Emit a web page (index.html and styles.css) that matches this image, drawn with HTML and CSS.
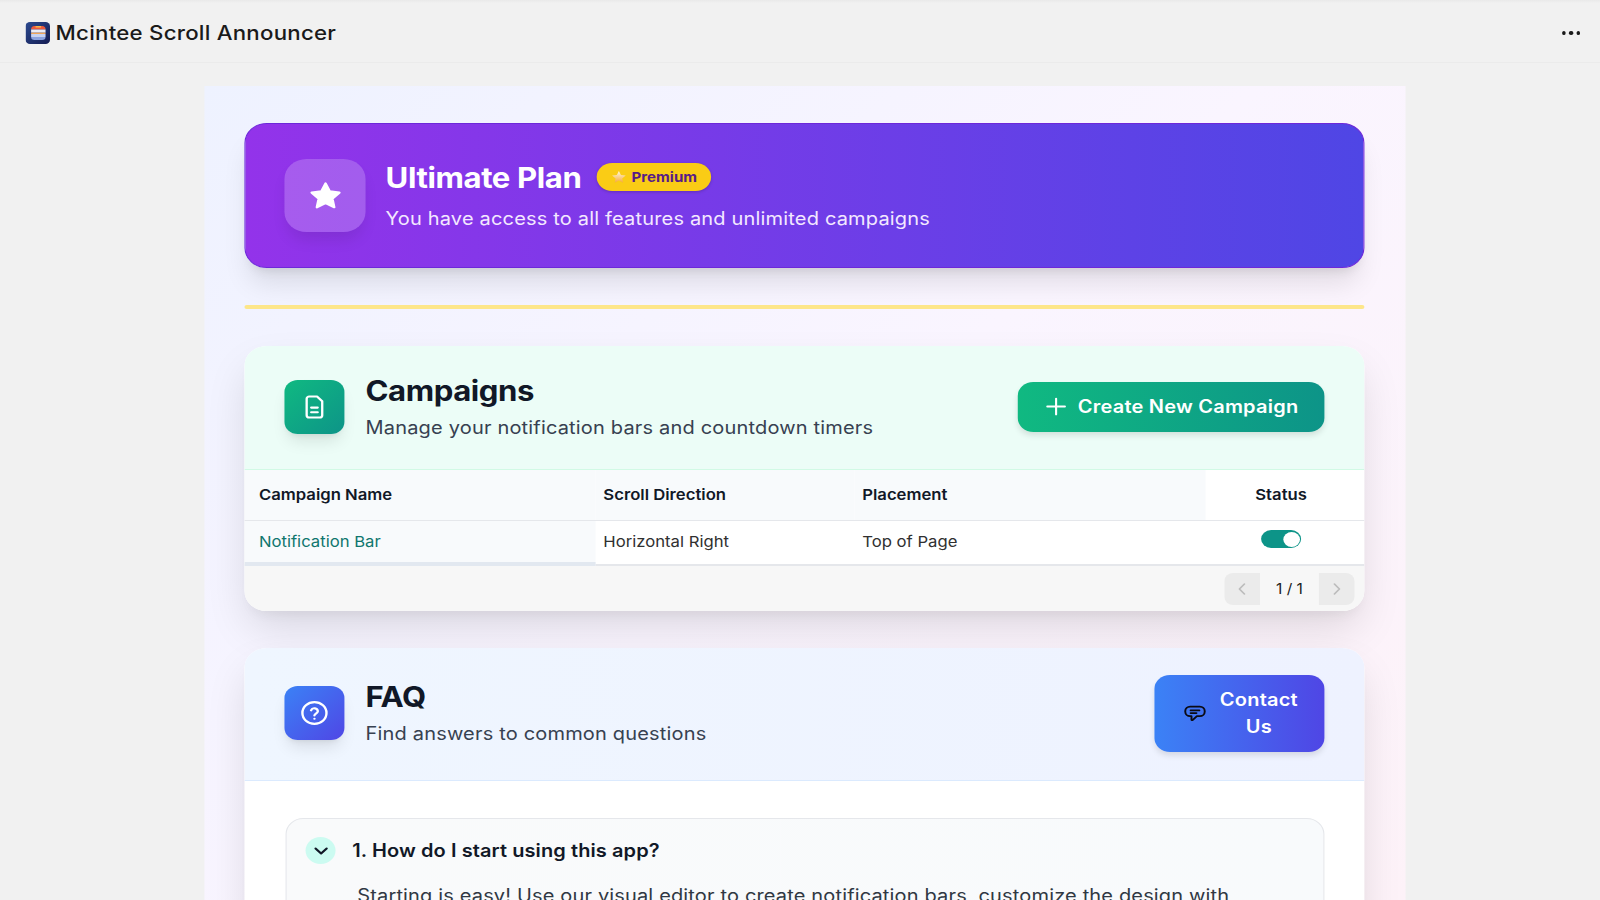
FILE: index.html
```html
<!DOCTYPE html>
<html lang="en">
<head>
<meta charset="utf-8">
<title>Mcintee Scroll Announcer</title>
<link rel="stylesheet" href="styles.css">
</head>
<body>
<div class="app">
  <header class="topbar">
    <div class="brand">
      <svg class="logo" viewBox="0 0 22 22" aria-hidden="true">
        <defs>
          <linearGradient id="lg" x1="0" y1="0" x2="1" y2="1"><stop offset="0" stop-color="#2c4a8f"/><stop offset="1" stop-color="#141c52"/></linearGradient>
        </defs>
        <rect width="22" height="22" rx="4" fill="url(#lg)"/>
        <path d="M5 7.5 Q5 4 8 4 H15 Q18 4 18 7.5 Z" fill="#ee5a3c"/>
        <rect x="9" y="4" width="5" height="1.6" fill="#f7b24a"/>
        <rect x="5" y="7.5" width="13" height="3.2" fill="#e9ecf7"/>
        <rect x="5" y="10.7" width="13" height="1.3" fill="#f0a65a"/>
        <rect x="5" y="12" width="13" height="3" fill="#c7d3f2"/>
        <path d="M5 15 H18 Q18 18 15 18 H8 Q5 18 5 15Z" fill="#8aa2e0"/>
      </svg>
      <span class="brand-name">Mcintee Scroll Announcer</span>
    </div>
    <div class="dots" aria-label="More"><i></i><i></i><i></i></div>
  </header>

  <main class="panel">
    <section class="plan">
      <div class="plan-icon">
        <svg viewBox="0 0 24 24" width="34" height="34" aria-hidden="true"><path fill="#fff" stroke="#fff" stroke-width="1.6" stroke-linejoin="round" d="M12 3.2l2.7 5.6 6.1.8-4.5 4.2 1.2 6.1L12 17l-5.5 2.9 1.2-6.1-4.5-4.2 6.1-.8z"/></svg>
      </div>
      <div class="plan-text">
        <div class="plan-head">
          <h1 class="plan-title">Ultimate Plan</h1>
          <span class="badge">
            <svg viewBox="0 0 24 24" width="14" height="14" aria-hidden="true"><defs><linearGradient id="st" x1="0" y1="0" x2="0" y2="1"><stop offset="0" stop-color="#fffbe0"/><stop offset="1" stop-color="#f6a93b"/></linearGradient></defs><path fill="url(#st)" d="M12 1.500l3.200 6.900 7.300.9-5.400 5.100 1.400 7.400L12 18.200l-6.500 3.600 1.400-7.400-5.400-5.100 7.300-.9z"/></svg>
            Premium
          </span>
        </div>
        <p class="plan-sub">You have access to all features and unlimited campaigns</p>
      </div>
    </section>

    <div class="rule"></div>

    <section class="card">
      <div class="card-head head-green">
        <div class="head-left">
          <div class="tile tile-green">
            <svg viewBox="0 0 24 24" width="28" height="28" fill="none" stroke="#fff" stroke-width="1.8" stroke-linecap="round" stroke-linejoin="round" aria-hidden="true"><path d="M14 3H8a2 2 0 0 0-2 2v14a2 2 0 0 0 2 2h8a2 2 0 0 0 2-2V7z"/><path d="M9.500 12.500h5M9.500 16.500h5"/></svg>
          </div>
          <div>
            <h2 class="card-title">Campaigns</h2>
            <p class="card-sub">Manage your notification bars and countdown timers</p>
          </div>
        </div>
        <button class="btn btn-green">
          <svg viewBox="0 0 18 18" width="19" height="19" fill="none" stroke="#fff" stroke-width="1.8" stroke-linecap="round" aria-hidden="true"><path d="M9 1.500v15M1.500 9h15"/></svg>
          Create New Campaign
        </button>
      </div>

      <div class="table">
        <div class="t-row t-header">
          <div class="th c1">Campaign Name</div>
          <div class="th c2">Scroll Direction</div>
          <div class="th c3">Placement</div>
          <div class="th c4">Status</div>
        </div>
        <div class="t-row t-body">
          <div class="td c1 td-link">Notification Bar</div>
          <div class="td c2">Horizontal Right</div>
          <div class="td c3">Top of Page</div>
          <div class="td c4"><span class="toggle"><i></i></span></div>
        </div>
      </div>

      <div class="pager">
        <span class="page-btn page-prev"><svg viewBox="0 0 16 16" width="16" height="16" fill="none" stroke="#bdbdbd" stroke-width="1.6" stroke-linecap="round" stroke-linejoin="round" aria-hidden="true"><path d="M10 3L5.500 8l4.500 5"/></svg></span>
        <span class="page-num">1 / 1</span>
        <span class="page-btn page-next"><svg viewBox="0 0 16 16" width="16" height="16" fill="none" stroke="#bdbdbd" stroke-width="1.6" stroke-linecap="round" stroke-linejoin="round" aria-hidden="true"><path d="M6 3l4.500 5L6 13"/></svg></span>
      </div>
    </section>

    <section class="card card-faq">
      <div class="card-head head-blue">
        <div class="head-left">
          <div class="tile tile-blue">
            <svg viewBox="0 0 24 24" width="26" height="26" fill="none" stroke="#fff" stroke-width="2" stroke-linecap="round" stroke-linejoin="round" aria-hidden="true"><circle cx="12" cy="12" r="10"/><path d="M9.200 9.500a2.900 2.900 0 0 1 5.600.9c0 1.900-2.800 2.400-2.800 3.900"/><path d="M12 17.300h.01"/></svg>
          </div>
          <div>
            <h2 class="card-title">FAQ</h2>
            <p class="card-sub">Find answers to common questions</p>
          </div>
        </div>
        <button class="btn btn-blue">
          <svg viewBox="0 0 24 24" width="21" height="21" fill="none" stroke="#0b0b14" stroke-width="2" stroke-linecap="round" stroke-linejoin="round" aria-hidden="true"><path d="M7 4h10a5 5 0 0 1 5 5v1a5 5 0 0 1-5 5h-3l-4.500 4.500c-.5.400-1.100.100-1.100-.5V15H7a5 5 0 0 1-5-5V9a5 5 0 0 1 5-5z"/><path d="M7.500 8.500h9M7.500 11.500h6"/></svg>
          <span class="btn-label">Contact Us</span>
        </button>
      </div>

      <div class="faq-body">
        <div class="faq-item">
          <div class="faq-q">
            <span class="faq-chev"><svg viewBox="0 0 16 16" width="16" height="16" fill="none" stroke="#111827" stroke-width="2" stroke-linecap="round" stroke-linejoin="round" aria-hidden="true"><path d="M3 5.500l5 5 5-5"/></svg></span>
            <span class="faq-text">1. How do I start using this app?</span>
          </div>
          <p class="faq-a">Starting is easy! Use our visual editor to create notification bars, customize the design with</p>
        </div>
      </div>
    </section>
  </main>
</div>
</body>
</html>
```

FILE: styles.css
```css
* { box-sizing: border-box; }
html, body { margin: 0; height: 900px; overflow: hidden; background: #f1f1f1; }
body { font-family: Inter, "Liberation Sans", sans-serif; color: #111827; }
h1, h2, p { margin: 0; }

/* The reference is a 1440-wide layout stretched horizontally to 1600. */
.app { width: 1440px; height: 900px; transform: scaleX(1.1111); transform-origin: 0 0; background: linear-gradient(#e9e9e9, #f1f1f1 3px); }

.topbar { height: 63px; display: flex; align-items: center; justify-content: space-between; padding: 4px 18px 0 23px; border-bottom: 1px solid #ebebeb; }
.brand { display: flex; align-items: center; gap: 5px; }
.logo { width: 22px; height: 22px; display: block; }
.brand-name { font-size: 20px; font-weight: 500; letter-spacing: .23px; color: #1a1a1a; }
.dots { display: flex; gap: 3px; }
.dots i { width: 3.500px; height: 3.500px; border-radius: 50%; background: #1a1a1a; }

.panel { margin: 23px 0 0 184px; width: 1081px; height: 814px; padding: 37px 37px 0 36px; background: linear-gradient(135deg, #eef2ff 0%, #faf5ff 50%, #fdf2f8 100%); overflow: hidden; }

.plan { height: 145px; display: flex; align-items: center; gap: 18px; padding: 0 35px; border-radius: 20px; border: 1px solid #6d28d9; background: linear-gradient(90deg, #9333ea, #4f46e5); box-shadow: 0 20px 25px -5px rgba(0,0,0,.1), 0 8px 10px -6px rgba(0,0,0,.1); color: #fff; }
.plan-icon { width: 73px; height: 73px; border-radius: 20px; background: rgba(255,255,255,.2); display: flex; align-items: center; justify-content: center; box-shadow: 0 10px 15px -3px rgba(0,0,0,.1); }
.plan-text { display: flex; flex-direction: column; gap: 10px; }
.plan-head { display: flex; align-items: center; gap: 14px; }
.plan-title { font-size: 28px; line-height: 36px; font-weight: 700; letter-spacing: -.35px; }
.badge { display: inline-flex; align-items: center; gap: 4px; height: 28px; margin-bottom: 1px; padding: 0 13px; border-radius: 14px; background: #facc15; color: #581c87; font-size: 13.600px; font-weight: 700; box-shadow: 0 1px 3px rgba(0,0,0,.2); }
.plan-sub { font-size: 18px; line-height: 26px; letter-spacing: .16px; color: #f3e8ff; }

.rule { height: 4px; margin: 37px 0; border-radius: 2px; background: #fde68a; }

.card { border-radius: 20px; overflow: hidden; background: #fff; box-shadow: 0 20px 40px -5px rgba(0,0,0,.13), 0 8px 12px -6px rgba(0,0,0,.06); }
.card-faq { margin-top: 37px; height: 400px; }
.card-head { display: flex; align-items: center; justify-content: space-between; padding: 0 36px; }
.head-green { height: 124px; background: #ecfdf7; border-bottom: 1px solid #d1fae5; }
.head-blue { height: 133px; background: linear-gradient(90deg, #eff6ff, #eef2ff); border-bottom: 1px solid #dbeafe; }
.head-left { display: flex; align-items: center; gap: 19px; }
.tile { width: 54px; height: 54px; margin-bottom: 2px; border-radius: 12px; display: flex; align-items: center; justify-content: center; box-shadow: 0 10px 15px -3px rgba(0,0,0,.1), 0 4px 6px -4px rgba(0,0,0,.1); }
.tile-green { background: linear-gradient(135deg, #10b981, #0d9488); }
.tile-blue { background: linear-gradient(135deg, #3b82f6, #4f46e5); }
.card-title { font-size: 28px; line-height: 33px; font-weight: 700; letter-spacing: -.4px; color: #111827; }
.card-sub { font-size: 18px; line-height: 26px; letter-spacing: .16px; color: #374151; margin-top: 7px; }

.btn { display: flex; align-items: center; margin-bottom: 2px; border: 0; border-radius: 14px; color: #fff; font: 600 18px/27px Inter, "Liberation Sans", sans-serif; letter-spacing: .2px; box-shadow: 0 4px 6px -1px rgba(0,0,0,.12); }
.btn-green { width: 276px; height: 50px; gap: 10px; padding: 0 0 0 25px; background: linear-gradient(90deg, #10b981, #0d9488); }
.btn-blue { width: 153px; height: 77px; gap: 11px; padding: 0 0 0 26px; background: linear-gradient(90deg, #3b82f6, #4f46e5); }
.btn-label { width: 72px; text-align: center; }

.table { font-size: 15px; }
.t-row { display: flex; }
.t-header { height: 51px; border-bottom: 1px solid #e5e7eb; font-weight: 600; }
.t-body { height: 45px; border-bottom: 2px solid #e5e7eb; }
.th, .td { display: flex; align-items: center; }
.th { padding-bottom: 2px; }
.c1 { width: 316px; padding-left: 13px; }
.c2 { width: 233px; padding-left: 7px; }
.c3 { width: 316px; padding-left: 7px; }
.c4 { width: 136px; justify-content: center; }
.th.c1, .th.c2, .th.c3 { background: #f8fafc; }
.td { color: #303030; padding-bottom: 3px; }
.td-link { color: #0f766e; background: #f8fafc; border-bottom: 4px solid #e2e8f0; margin-bottom: -2px; padding-bottom: 1px; }
.toggle { width: 36px; height: 18px; border-radius: 9px; background: #0d9488; position: relative; display: block; margin-bottom: 4px; }
.toggle i { position: absolute; right: 1px; top: 1.500px; width: 15px; height: 15px; border-radius: 50%; background: #fff; }

.pager { height: 45px; display: flex; align-items: center; justify-content: flex-end; padding: 0 9px; background: #f7f7f7; }
.page-btn { width: 32px; height: 32px; display: flex; align-items: center; justify-content: center; background: #ebebeb; }
.page-prev { border-radius: 8px 0 0 8px; }
.page-next { border-radius: 0 8px 8px 0; }
.page-num { width: 53px; text-align: center; font-size: 14px; color: #202020; }

.faq-body { padding: 37px 36px 37px 36.500px; }
.faq-item { height: 200px; border: 1px solid #e5e7eb; border-radius: 16px; background: linear-gradient(90deg, #f9fafb, #f8fafc); padding: 18px 18px 0 17.500px; }
.faq-q { display: flex; align-items: center; gap: 15px; }
.faq-chev { width: 27px; height: 27px; border-radius: 50%; background: #ccfbf1; display: flex; align-items: center; justify-content: center; }
.faq-text { font-size: 18px; font-weight: 600; letter-spacing: .08px; color: #111827; }
.faq-a { margin: 19px 0 0 46.500px; font-size: 18px; line-height: 26px; letter-spacing: .14px; color: #303843; white-space: nowrap; }
```
